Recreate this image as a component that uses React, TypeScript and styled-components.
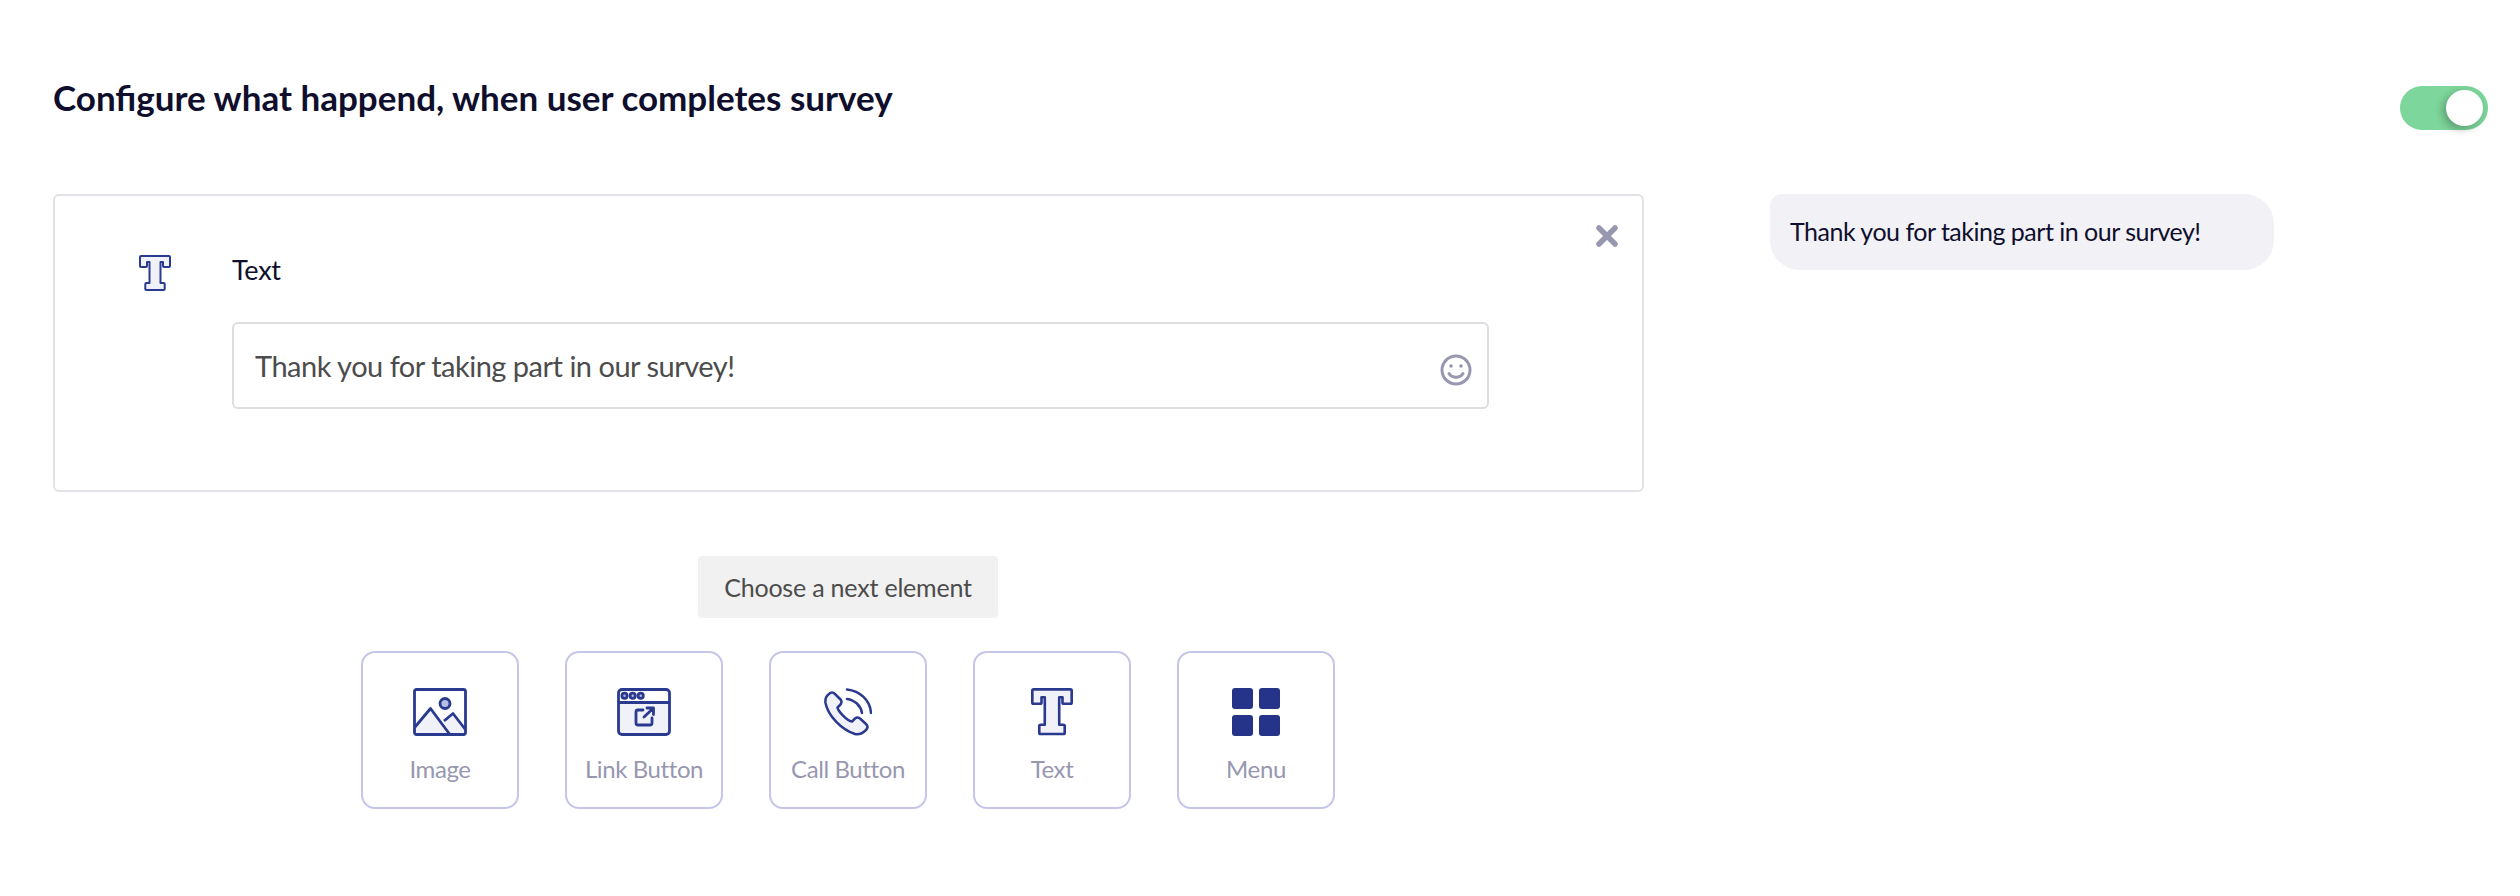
import React from 'react'
import styled, { createGlobalStyle } from 'styled-components'

const GlobalStyle = createGlobalStyle`
  html, body {
    margin: 0;
    padding: 0;
    background: #fff;
  }
  body {
    font-family: 'Lato', 'Liberation Sans', sans-serif;
  }
`

const Page = styled.div`
  width: 2520px;
  height: 896px;
  box-sizing: border-box;
  padding: 86px 32px 0 53px;
  overflow: hidden;
`

const Header = styled.div`
  display: flex;
  justify-content: space-between;
  align-items: flex-start;
  height: 108px;
`

const Title = styled.h1`
  margin: -11px 0 0;
  font-size: 35px;
  line-height: 44px;
  font-weight: 700;
  color: #0f0f2d;
`

const Toggle = styled.div`
  position: relative;
  width: 88px;
  height: 44px;
  border-radius: 22px;
  background: #7dd69b;
`

const Knob = styled.span`
  position: absolute;
  top: 4px;
  right: 5px;
  width: 37px;
  height: 36px;
  border-radius: 50%;
  background: #fff;
  box-shadow: -3px 3px 8px rgba(0, 0, 0, 0.28);
`

const Main = styled.div`
  display: flex;
  align-items: flex-start;
  gap: 126px;
`

const Left = styled.div`
  width: 1591px;
  display: flex;
  flex-direction: column;
  align-items: center;
`

const Card = styled.div`
  position: relative;
  width: 100%;
  height: 298px;
  box-sizing: border-box;
  border: 2px solid #e2e2e8;
  border-radius: 6px;
  padding: 59px 0 0 84px;
  display: grid;
  grid-template-columns: 32px 1fr;
  column-gap: 61px;
  align-content: start;
`

const CardIcon = styled.div`
  height: 36px;
`

const CardLabel = styled.div`
  height: 36px;
  font-size: 27px;
  line-height: 30px;
  letter-spacing: -0.3px;
  color: #0f0f2d;
`

const InputBox = styled.div`
  grid-column: 2;
  margin-top: 31px;
  width: 1257px;
  height: 87px;
  box-sizing: border-box;
  border: 2px solid #dedee2;
  border-radius: 6px;
  padding: 0 15px 0 21px;
  display: flex;
  align-items: center;
  justify-content: space-between;
`

const InputText = styled.span`
  font-size: 29px;
  letter-spacing: -0.5px;
  color: #4c4c4c;
`

const SmileIcon = styled.svg`
  margin-top: 8px;
`

const CloseButton = styled.div`
  position: absolute;
  top: 29px;
  right: 24px;
  width: 22px;
  height: 22px;
  color: #9897b0;
`

const Chip = styled.div`
  margin: 64px 1px 0 0;
  width: 300px;
  height: 62px;
  border-radius: 4px;
  background: #f1f1f1;
  color: #4c4c4c;
  font-size: 25px;
  letter-spacing: -0.2px;
  display: flex;
  align-items: center;
  justify-content: center;
`

const Tiles = styled.div`
  margin: 33px 1px 0 0;
  display: flex;
  gap: 46px;
`

const Tile = styled.div`
  width: 158px;
  height: 158px;
  box-sizing: border-box;
  border: 2px solid #c5c5ea;
  border-radius: 14px;
  display: flex;
  flex-direction: column;
  align-items: center;
  padding-top: 35px;
`

const TileIcon = styled.div`
  height: 48px;
  display: flex;
  align-items: center;
  justify-content: center;
`

const TileLabel = styled.div`
  margin-top: 17px;
  font-size: 24px;
  line-height: 32px;
  letter-spacing: -0.4px;
  color: #9897b0;
  white-space: nowrap;
`

const Bubble = styled.div`
  width: 504px;
  height: 76px;
  box-sizing: border-box;
  padding: 0 0 3px 20px;
  border-radius: 12px 30px 30px 30px;
  background: #f1f1f6;
  color: #0f0f2d;
  font-size: 25px;
  letter-spacing: -0.5px;
  display: flex;
  align-items: center;
`

const NAVY = '#2a3a8f'
const TINT = '#f0f1f9'
const SOFT = '#b9bfe2'

const TextGlyph = ({ size }: { size: number }) => (
  <svg width={size} height={size * 1.125} viewBox="0 0 32 36" fill={TINT} stroke={NAVY} strokeWidth="2" strokeLinejoin="round">
    <path d="M2 1H30a1 1 0 0 1 1 1v9a1 1 0 0 1-1 1H25a1 1 0 0 1-1-1V7H21.500V28H24.700a1 1 0 0 1 1 1v5a1 1 0 0 1-1 1H7.300a1 1 0 0 1-1-1v-5a1 1 0 0 1 1-1H10.500V7H8v4a1 1 0 0 1-1 1H2a1 1 0 0 1-1-1V2a1 1 0 0 1 1-1z" />
  </svg>
)

const ImageGlyph = () => (
  <svg width="54" height="48" viewBox="0 0 54 48" fill="none" stroke={NAVY} strokeWidth="2.800" strokeLinejoin="round">
    <path d="M2 39 18 20l19 26H4a2 2 0 0 1-2-2z" fill={TINT} stroke="none" />
    <path d="M30 32 40 25l12 15v6H37z" fill={TINT} stroke="none" />
    <rect x="1.500" y="1.500" width="51" height="45" rx="2" />
    <circle cx="32" cy="15.500" r="5" fill={SOFT} />
    <path d="M2 39 17.500 20.500 36.500 46" />
    <path d="M31 33 40 25.500 52 41" />
  </svg>
)

const LinkGlyph = () => (
  <svg width="54" height="48" viewBox="0 0 54 48" fill="none" stroke={NAVY} strokeWidth="2.800" strokeLinejoin="round" strokeLinecap="round">
    <path d="M2 15h50v29a3 3 0 0 1-3 3H5a3 3 0 0 1-3-3z" fill={TINT} stroke="none" />
    <rect x="1.500" y="1.500" width="51" height="45" rx="3.500" />
    <path d="M2 14.500h50" />
    <circle cx="7.500" cy="7.700" r="2.600" fill={SOFT} />
    <circle cx="15.700" cy="7.700" r="2.600" fill={SOFT} />
    <circle cx="23.700" cy="7.700" r="2.600" fill={SOFT} />
    <path d="M26 22h-5a2 2 0 0 0-2 2v11a2 2 0 0 0 2 2h12a2 2 0 0 0 2-2v-5" />
    <path d="M27 29 36 20.500M30 20h6.500v6.500" />
  </svg>
)

const CallGlyph = () => (
  <svg width="48" height="48" viewBox="0 0 48 48" fill="none" stroke={NAVY} strokeWidth="2.500" strokeLinejoin="round" strokeLinecap="round">
    <path d="M5 6C7 4 9 4 11 6L17 12C18 14 18 15 16 17L13.500 19.500C14 23 23 33 28 33.500L31 30.500C33 29 34 29 36 30.500L42 36C44 38 44 40 42 42C38 46 35 47 31 46C18 42 4 28 1.500 15C1 11 2 8 5 6Z" fill={TINT} />
    <path d="M23 11C31 12 37 18 38 25" />
    <path d="M23 1.500C36 3 46 12 47 25" />
  </svg>
)

const MenuGlyph = () => (
  <svg width="48" height="48" viewBox="0 0 48 48" fill="#253488">
    <rect x="0" y="0" width="21" height="21" rx="3" />
    <rect x="27" y="0" width="21" height="21" rx="3" />
    <rect x="0" y="27" width="21" height="21" rx="3" />
    <rect x="27" y="27" width="21" height="21" rx="3" />
  </svg>
)

const tiles = [
  { label: 'Image', icon: <ImageGlyph /> },
  { label: 'Link Button', icon: <LinkGlyph /> },
  { label: 'Call Button', icon: <CallGlyph /> },
  { label: 'Text', icon: <TextGlyph size={42} /> },
  { label: 'Menu', icon: <MenuGlyph /> },
]

export default function App() {
  return (
    <Page>
      <GlobalStyle />
      <Header>
        <Title>Configure what happend, when user completes survey</Title>
        <Toggle>
          <Knob />
        </Toggle>
      </Header>
      <Main>
        <Left>
          <Card>
            <CardIcon>
              <TextGlyph size={32} />
            </CardIcon>
            <CardLabel>Text</CardLabel>
            <InputBox>
              <InputText>Thank you for taking part in our survey!</InputText>
              <SmileIcon width="32" height="32" viewBox="0 0 32 32" fill="none" stroke="#9897b0" strokeWidth="3" strokeLinecap="round">
                <circle cx="16" cy="16" r="14" />
                <path d="M9 19.500c3 5 11 5 14 0" />
                <circle cx="11" cy="12" r="1.800" fill="#9897b0" stroke="none" />
                <circle cx="21" cy="12" r="1.800" fill="#9897b0" stroke="none" />
              </SmileIcon>
            </InputBox>
            <CloseButton>
              <svg width="22" height="22" viewBox="0 0 22 22" stroke="currentColor" strokeWidth="5.500" strokeLinecap="round">
                <path d="M3 3l16 16M19 3 3 19" />
              </svg>
            </CloseButton>
          </Card>
          <Chip>Choose a next element</Chip>
          <Tiles>
            {tiles.map((tile) => (
              <Tile key={tile.label}>
                <TileIcon>{tile.icon}</TileIcon>
                <TileLabel>{tile.label}</TileLabel>
              </Tile>
            ))}
          </Tiles>
        </Left>
        <Bubble>Thank you for taking part in our survey!</Bubble>
      </Main>
    </Page>
  )
}
